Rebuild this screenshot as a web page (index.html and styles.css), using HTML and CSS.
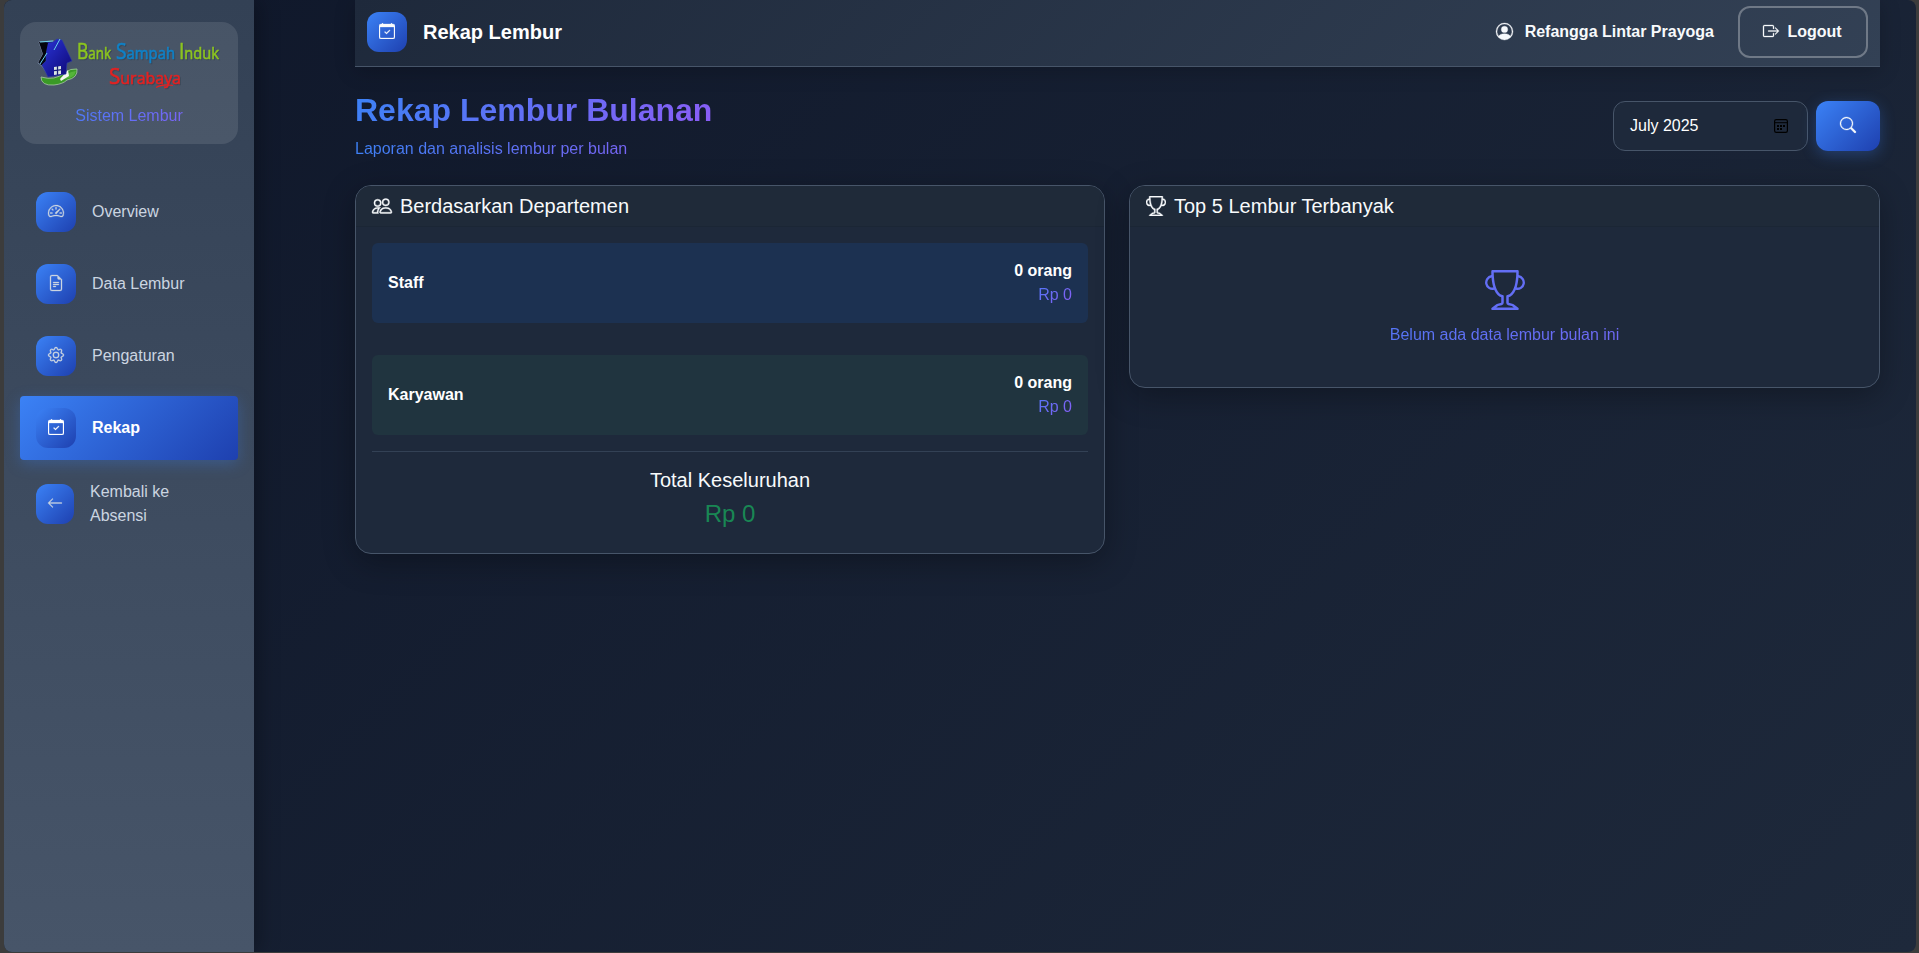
FILE: index.html
```html
<!DOCTYPE html>
<html lang="id">
<head>
<meta charset="utf-8">
<title>Rekap Lembur</title>
<link rel="stylesheet" href="styles.css">
</head>
<body>
<svg class="sprite" aria-hidden="true">
  <symbol id="calendar-check" viewBox="0 0 16 16"><path d="M10.854 7.146a.5.5 0 0 1 0 .708l-3 3a.5.5 0 0 1-.708 0l-1.5-1.5a.5.5 0 1 1 .708-.708L7.5 9.793l2.646-2.647a.5.5 0 0 1 .708 0"/><path d="M3.5 0a.5.5 0 0 1 .5.5V1h8V.5a.5.5 0 0 1 1 0V1h1a2 2 0 0 1 2 2v11a2 2 0 0 1-2 2H2a2 2 0 0 1-2-2V3a2 2 0 0 1 2-2h1V.5a.5.5 0 0 1 .5-.5M1 4v10a1 1 0 0 0 1 1h12a1 1 0 0 0 1-1V4z"/></symbol>
  <symbol id="trophy" viewBox="0 0 16 16"><path d="M2.5.5A.5.5 0 0 1 3 0h10a.5.5 0 0 1 .5.5q0 .807-.034 1.536a3 3 0 1 1-1.133 5.89c-.79 1.865-1.878 2.777-2.833 3.011v2.173l1.425.356c.194.048.377.135.537.255L13.3 15.1a.5.5 0 0 1-.3.9H3a.5.5 0 0 1-.3-.9l1.838-1.379c.16-.12.343-.207.537-.255L6.5 13.11v-2.173c-.955-.234-2.043-1.146-2.833-3.012a3 3 0 1 1-1.132-5.89A33 33 0 0 1 2.5.5m.099 2.54a2 2 0 0 0 .72 3.935c-.333-1.05-.588-2.346-.72-3.935m10.083 3.935a2 2 0 0 0 .72-3.935c-.133 1.59-.388 2.885-.72 3.935M3.504 1q.01.775.056 1.469c.13 2.028.457 3.546.87 4.667C5.294 9.48 6.484 10 7 10a.5.5 0 0 1 .5.5v2.61a1 1 0 0 1-.757.97l-1.426.356a.5.5 0 0 0-.179.085L4.5 15h7l-.638-.479a.5.5 0 0 0-.18-.085l-1.425-.356a1 1 0 0 1-.757-.97V10.5A.5.5 0 0 1 9 10c.516 0 1.706-.52 2.57-2.864.413-1.12.74-2.64.87-4.667q.045-.694.056-1.469z"/></symbol>
</svg>
<div class="window">
  <aside class="sidebar">
    <div class="brand">
      <svg class="logo" viewBox="0 0 190 54">
        <defs><linearGradient id="wall" x1="0" y1="0" x2="1" y2="1"><stop offset="0" stop-color="#2a35d8"/><stop offset="1" stop-color="#0d0672"/></linearGradient></defs>
        <path d="M5 40q0 9 13 8 9-1 13-5 11-2 10-11-6-1-13 4-9 8-23 4z" fill="#3a9a26" stroke="#a8c8a4" stroke-width=".8"/>
        <path d="M27 42q3-7 13-8-2 8-13 8z" fill="#55b53a"/>
        <path d="M24 42l8-9 1 6-8 5z" fill="#f4f6f0"/>
        <path d="M3 5l15-1-6 34-6-9-4-3 5-9z" fill="#060a18" stroke="#8796b5" stroke-width=".8"/>
        <path d="M10 6l7-1 4-3 5 1 10 21-5 2-1 11-18 3-4-8-2-4 4-4z" fill="url(#wall)" stroke="#2b3aa8" stroke-width=".6"/>
        <path d="M3 5l9 1-3 14-7 6 5-9z" fill="#03050b"/>
        <path d="M4 5l13-1M24 2l-6 11M11 16L4 27" fill="none" stroke="#69d3ec" stroke-width="1"/>
        <path d="M18 30l7-1v8l-7 1z" fill="#dce8e4"/><path d="M21.5 29v9M18 33.7l8-1" stroke="#191f78" stroke-width="1.3"/>
        <g class="logo-type">
          <text class="logo-green" x="41" y="22" textLength="34" lengthAdjust="spacingAndGlyphs"><tspan font-size="22">B</tspan><tspan>ank</tspan></text>
          <text class="logo-blue" x="80" y="22" textLength="59" lengthAdjust="spacingAndGlyphs"><tspan font-size="22">S</tspan><tspan>ampah</tspan></text>
          <text class="logo-green" x="143" y="22" textLength="40" lengthAdjust="spacingAndGlyphs"><tspan font-size="22">I</tspan><tspan>nduk</tspan></text>
          <text class="logo-red" x="73" y="46.5" textLength="72" lengthAdjust="spacingAndGlyphs"><tspan font-size="22">S</tspan><tspan>urabaya</tspan></text>
        </g>
        <path d="M120 50.5q6-4 17-2" fill="none" stroke="#e32222" stroke-width="1.2"/>
      </svg>
      <div class="muted brand-sub">Sistem Lembur</div>
    </div>
    <nav class="menu">
      <a class="item"><span class="tile"><svg class="icon" viewBox="0 0 16 16"><path d="M8 4a.5.5 0 0 1 .5.5V6a.5.5 0 0 1-1 0V4.5A.5.5 0 0 1 8 4M3.732 5.732a.5.5 0 0 1 .707 0l.915.914a.5.5 0 1 1-.708.708l-.914-.915a.5.5 0 0 1 0-.707M2 10a.5.5 0 0 1 .5-.5h1.586a.5.5 0 0 1 0 1H2.5A.5.5 0 0 1 2 10m9.5 0a.5.5 0 0 1 .5-.5h1.5a.5.5 0 0 1 0 1H12a.5.5 0 0 1-.5-.5m.754-4.246a.39.39 0 0 0-.527-.02L7.547 9.31a.91.91 0 1 0 1.302 1.258l3.434-4.297a.39.39 0 0 0-.029-.518z"/><path fill-rule="evenodd" d="M0 10a8 8 0 1 1 15.547 2.661c-.442 1.253-1.845 1.602-2.932 1.25C11.309 13.488 9.475 13 8 13c-1.474 0-3.31.488-4.615.911-1.087.352-2.49.003-2.932-1.25A8 8 0 0 1 0 10m8-7a7 7 0 0 0-6.603 9.329c.203.575.923.876 1.68.63C4.397 12.533 6.358 12 8 12s3.604.532 4.923.96c.757.245 1.477-.056 1.68-.631A7 7 0 0 0 8 3"/></svg></span><span>Overview</span></a>
      <a class="item"><span class="tile"><svg class="icon" viewBox="0 0 16 16"><path d="M5.5 7a.5.5 0 0 0 0 1h5a.5.5 0 0 0 0-1zM5 9.5a.5.5 0 0 1 .5-.5h5a.5.5 0 0 1 0 1h-5a.5.5 0 0 1-.5-.5m0 2a.5.5 0 0 1 .5-.5h2a.5.5 0 0 1 0 1h-2a.5.5 0 0 1-.5-.5"/><path d="M9.5 0H4a2 2 0 0 0-2 2v12a2 2 0 0 0 2 2h8a2 2 0 0 0 2-2V4.5zm0 1v2A1.5 1.5 0 0 0 11 4.5h2V14a1 1 0 0 1-1 1H4a1 1 0 0 1-1-1V2a1 1 0 0 1 1-1z"/></svg></span><span>Data Lembur</span></a>
      <a class="item"><span class="tile"><svg class="icon" viewBox="0 0 16 16"><path d="M8 4.754a3.246 3.246 0 1 0 0 6.492 3.246 3.246 0 0 0 0-6.492M5.754 8a2.246 2.246 0 1 1 4.492 0 2.246 2.246 0 0 1-4.492 0"/><path d="M9.796 1.343c-.527-1.79-3.065-1.79-3.592 0l-.094.319a.873.873 0 0 1-1.255.52l-.292-.16c-1.64-.892-3.433.902-2.54 2.541l.159.292a.873.873 0 0 1-.52 1.255l-.319.094c-1.79.527-1.79 3.065 0 3.592l.319.094a.873.873 0 0 1 .52 1.255l-.16.292c-.892 1.64.901 3.434 2.541 2.54l.292-.159a.873.873 0 0 1 1.255.52l.094.319c.527 1.79 3.065 1.79 3.592 0l.094-.319a.873.873 0 0 1 1.255-.52l.292.16c1.64.893 3.434-.902 2.54-2.541l-.159-.292a.873.873 0 0 1 .52-1.255l.319-.094c1.79-.527 1.79-3.065 0-3.592l-.319-.094a.873.873 0 0 1-.52-1.255l.16-.292c.893-1.64-.902-3.433-2.541-2.54l-.292.159a.873.873 0 0 1-1.255-.52zm-2.633.283c.246-.835 1.428-.835 1.674 0l.094.319a1.873 1.873 0 0 0 2.693 1.115l.291-.16c.764-.415 1.6.42 1.184 1.185l-.159.292a1.873 1.873 0 0 0 1.116 2.692l.318.094c.835.246.835 1.428 0 1.674l-.319.094a1.873 1.873 0 0 0-1.115 2.693l.16.291c.415.764-.42 1.6-1.185 1.184l-.291-.159a1.873 1.873 0 0 0-2.693 1.116l-.094.318c-.246.835-1.428.835-1.674 0l-.094-.319a1.873 1.873 0 0 0-2.692-1.115l-.292.16c-.764.415-1.6-.42-1.184-1.185l.159-.291A1.873 1.873 0 0 0 1.945 8.93l-.319-.094c-.835-.246-.835-1.428 0-1.674l.319-.094A1.873 1.873 0 0 0 3.06 4.377l-.16-.292c-.415-.764.42-1.6 1.185-1.184l.292.159a1.873 1.873 0 0 0 2.692-1.115z"/></svg></span><span>Pengaturan</span></a>
      <a class="item active"><span class="tile"><svg class="icon"><use href="#calendar-check"/></svg></span><span>Rekap</span></a>
      <a class="item back"><span class="tile"><svg class="icon" viewBox="0 0 16 16"><path fill-rule="evenodd" d="M15 8a.5.5 0 0 0-.5-.5H2.707l3.147-3.146a.5.5 0 1 0-.708-.708l-4 4a.5.5 0 0 0 0 .708l4 4a.5.5 0 0 0 .708-.708L2.707 8.5H14.5A.5.5 0 0 0 15 8"/></svg></span><span>Kembali ke Absensi</span></a>
    </nav>
  </aside>
  <main class="main">
    <header class="topbar">
      <span class="tile"><svg class="icon"><use href="#calendar-check"/></svg></span>
      <span class="topbar-title">Rekap Lembur</span>
      <span class="user"><svg class="icon user-icon" viewBox="0 0 16 16"><path d="M11 6a3 3 0 1 1-6 0 3 3 0 0 1 6 0"/><path fill-rule="evenodd" d="M0 8a8 8 0 1 1 16 0A8 8 0 0 1 0 8m8-7a7 7 0 0 0-5.468 11.37C3.242 11.226 4.805 10 8 10s4.757 1.225 5.468 2.37A7 7 0 0 0 8 1"/></svg>Refangga Lintar Prayoga</span>
      <button class="logout"><svg class="icon" viewBox="0 0 16 16"><path fill-rule="evenodd" d="M10 12.5a.5.5 0 0 1-.5.5h-8a.5.5 0 0 1-.5-.5v-9a.5.5 0 0 1 .5-.5h8a.5.5 0 0 1 .5.5v2a.5.5 0 0 0 1 0v-2A1.5 1.5 0 0 0 9.5 2h-8A1.5 1.5 0 0 0 0 3.5v9A1.5 1.5 0 0 0 1.5 14h8a1.5 1.5 0 0 0 1.5-1.5v-2a.5.5 0 0 0-1 0z"/><path fill-rule="evenodd" d="M15.854 8.354a.5.5 0 0 0 0-.708l-3-3a.5.5 0 0 0-.708.708L14.293 7.5H5.5a.5.5 0 0 0 0 1h8.793l-2.147 2.146a.5.5 0 0 0 .708.708z"/></svg>Logout</button>
    </header>
    <section class="page-head">
      <div>
        <h2 class="page-title">Rekap Lembur Bulanan</h2>
        <p class="muted">Laporan dan analisis lembur per bulan</p>
      </div>
      <form class="filter">
        <div class="month"><span>July 2025</span><svg class="month-icon" viewBox="0 0 14 14"><rect x=".6" y=".6" width="12.8" height="12.8" rx="1.6" fill="none" stroke="#000" stroke-width="1.2"/><path d="M1 3.7h12" stroke="#000"/><path d="M6 6h2v2H6zM9 6h2v2H9zM3 6h2v2H3zM3 9h2v2H3zM6 9h2v2H6z"/></svg></div>
        <button class="search" type="button"><svg class="icon" viewBox="0 0 16 16"><path d="M11.742 10.344a6.5 6.5 0 1 0-1.397 1.398h-.001q.044.06.098.115l3.85 3.85a1 1 0 0 0 1.415-1.414l-3.85-3.85a1 1 0 0 0-.115-.1zM12 6.5a5.5 5.5 0 1 1-11 0 5.5 5.5 0 0 1 11 0"/></svg></button>
      </form>
    </section>
    <section class="cards">
      <article class="card">
        <h5 class="card-head"><svg class="head-icon" viewBox="0 0 16 16"><path d="M15 14s1 0 1-1-1-4-5-4-5 3-5 4 1 1 1 1zm-7.978-1L7 12.996c.001-.264.167-1.03.76-1.72C8.312 10.629 9.282 10 11 10c1.717 0 2.687.63 3.24 1.276.593.69.758 1.457.76 1.72l-.008.002-.014.002zM11 7a2 2 0 1 0 0-4 2 2 0 0 0 0 4m3-2a3 3 0 1 1-6 0 3 3 0 0 1 6 0M6.936 9.28a6 6 0 0 0-1.23-.247A7 7 0 0 0 5 9c-4 0-5 3-5 4q0 1 1 1h4.216A2.24 2.24 0 0 1 5 13c0-1.01.377-2.042 1.09-2.904.243-.294.526-.569.846-.816M4.92 10A5.5 5.5 0 0 0 4 13H1c0-.26.164-1.03.76-1.724.545-.636 1.492-1.256 3.16-1.275ZM1.5 5.5a3 3 0 1 1 6 0 3 3 0 0 1-6 0m3-2a2 2 0 1 0 0 4 2 2 0 0 0 0-4"/></svg><span>Berdasarkan Departemen</span></h5>
        <div class="card-body">
          <div class="dept staff"><strong>Staff</strong><div class="dept-total"><strong>0 orang</strong><p class="muted">Rp 0</p></div></div>
          <div class="dept worker"><strong>Karyawan</strong><div class="dept-total"><strong>0 orang</strong><p class="muted">Rp 0</p></div></div>
          <div class="total"><h5>Total Keseluruhan</h5><div class="amount">Rp 0</div></div>
        </div>
      </article>
      <article class="card">
        <h5 class="card-head"><svg class="head-icon"><use href="#trophy"/></svg><span>Top 5 Lembur Terbanyak</span></h5>
        <div class="empty"><svg class="empty-icon"><use href="#trophy"/></svg><p class="muted">Belum ada data lembur bulan ini</p></div>
      </article>
    </section>
  </main>
</div>
</body>
</html>
```
FILE: styles.css
```css
* { box-sizing: border-box; }
html { height: 100%; background: #3c3c3c; }
body {
  margin: 0;
  height: 100vh;
  padding: 0 3px 1px 4px;
  font: 16px/24px "Liberation Sans", Arial, sans-serif;
  color: #f8fafc;
  overflow: hidden;
}
h2, h5, p { margin: 0; }
button { font: inherit; color: inherit; }
.sprite { display: none; }
.icon { display: block; width: 16px; height: 16px; fill: currentColor; stroke: currentColor; stroke-width: .3; flex: none; overflow: visible; }
.window {
  display: flex;
  height: 100%;
  border-radius: 8px;
  overflow: hidden;
  background: linear-gradient(135deg, #0f172a 0%, #1e293b 100%);
}
.sidebar {
  width: 250px;
  flex: none;
  padding: 22px 16px;
  background: linear-gradient(180deg, #334155, #475569);
  box-shadow: 4px 0 20px rgba(0, 0, 0, .3);
}
.brand {
  height: 122px;
  padding: 15px 14px 0;
  border-radius: 16px;
  background: rgba(255, 255, 255, .1);
}
.logo { display: block; width: 190px; height: 54px; margin-left: 2px; overflow: visible; }
.logo-type { filter: drop-shadow(1px 1px 0 rgba(35, 50, 60, .35)); }
.logo-type text { font-family: "Open Sans", sans-serif; font-size: 17px; }
.logo-green { fill: #8cc51f; stroke: #8cc51f; stroke-width: .6; }
.logo-blue { fill: #0f82c8; stroke: #0f82c8; stroke-width: .6; }
.logo-red { fill: #e32222; stroke: #e32222; stroke-width: .6; }
.brand-sub { margin-top: 13px; text-align: center; }
.muted {
  color: transparent;
  background: linear-gradient(135deg, #3b82f6, #8b5cf6);
  -webkit-background-clip: text;
  background-clip: text;
}
.menu { display: grid; gap: 8px; margin-top: 36px; }
.item {
  display: flex;
  align-items: center;
  gap: 16px;
  height: 64px;
  padding: 0 16px;
  border-radius: 4px;
  color: #cbd5e1;
}
.tile {
  display: grid;
  place-items: center;
  width: 40px;
  height: 40px;
  flex: none;
  padding-bottom: 2px;
  border-radius: 12px;
  background: linear-gradient(135deg, #3b82f6, #1e40af);
}
.active {
  color: #fff;
  font-weight: 700;
  background: linear-gradient(135deg, #3b82f6, #1e40af);
  box-shadow: 0 4px 15px rgba(59, 130, 246, .3);
}
.back { height: 72px; }
.back .tile { width: 38px; }
.main { flex: 1; padding: 0 36px 0 101px; }
.topbar {
  display: flex;
  align-items: center;
  height: 67px;
  padding: 0 12px 2px;
  border-bottom: 1px solid #475569;
  background: linear-gradient(135deg, #1e293b, #334155);
  box-shadow: 0 4px 20px rgba(0, 0, 0, .2);
}
.topbar-title { margin-left: 16px; font-size: 20px; font-weight: 700; color: #fff; }
.user { display: flex; align-items: center; gap: 12px; margin-left: auto; font-weight: 700; }
.user-icon { width: 17px; height: 17px; margin-top: -2px; }
.logout {
  display: flex;
  align-items: center;
  justify-content: center;
  gap: 8px;
  width: 130px;
  height: 52px;
  margin-left: 24px;
  padding: 0 1px 0 0;
  border: 2px solid rgba(255, 255, 255, .3);
  border-radius: 12px;
  background: none;
  font-weight: 700;
}
.logout .icon { margin-top: -2px; }
.page-head { display: flex; align-items: center; justify-content: space-between; height: 70px; margin: 24px 0; }
.page-title {
  margin-bottom: 8px;
  font-size: 32px;
  line-height: 38px;
  color: transparent;
  background: linear-gradient(135deg, #3b82f6, #8b5cf6);
  -webkit-background-clip: text;
  background-clip: text;
}
.filter { display: flex; gap: 8px; }
.month {
  display: flex;
  align-items: center;
  justify-content: space-between;
  width: 195px;
  height: 50px;
  padding: 0 19px 0 16px;
  border: 1px solid #475569;
  border-radius: 12px;
  background: #1e293b;
  color: #fff;
}
.month-icon { width: 14px; height: 14px; }
.search {
  display: grid;
  place-items: center;
  width: 64px;
  height: 50px;
  padding: 0 0 2px;
  border: 0;
  border-radius: 12px;
  background: linear-gradient(135deg, #3b82f6, #1e40af);
  box-shadow: 0 4px 15px rgba(59, 130, 246, .3);
}
.cards { display: grid; grid-template-columns: 750fr 751fr; gap: 24px; align-items: start; }
.card {
  border: 1px solid #475569;
  border-radius: 16px;
  overflow: hidden;
  background: #1e293b;
  box-shadow: 0 8px 32px rgba(0, 0, 0, .3);
}
.card-head {
  display: flex;
  align-items: center;
  gap: 7px;
  height: 41px;
  padding: 0 16px;
  border-bottom: 1px solid #1b2635;
  background: #1f2a39;
  font-size: 20px;
  font-weight: 400;
}
.head-icon { display: block; width: 20px; height: 20px; margin-right: 1px; fill: currentColor; stroke: currentColor; stroke-width: .3; overflow: visible; }
.card-body { padding: 16px; }
.dept {
  display: flex;
  align-items: center;
  justify-content: space-between;
  height: 80px;
  padding: 0 16px;
  border-radius: 6px;
  color: #fff;
}
.staff { margin-bottom: 32px; background: #1c3151; }
.worker { margin-bottom: 16px; background: #20343f; }
.dept-total { text-align: right; }
.total { padding: 16px 0 9px; border-top: 1px solid #334155; text-align: center; }
.total h5 { margin-bottom: 7px; font-size: 20px; font-weight: 400; }
.amount { color: #198754; font-size: 24px; line-height: 29px; }
.empty { padding: 43px 16px 40px; text-align: center; }
.empty-icon { display: block; width: 40px; height: 40px; margin: 0 auto 13px; fill: #636ef5; }
```
